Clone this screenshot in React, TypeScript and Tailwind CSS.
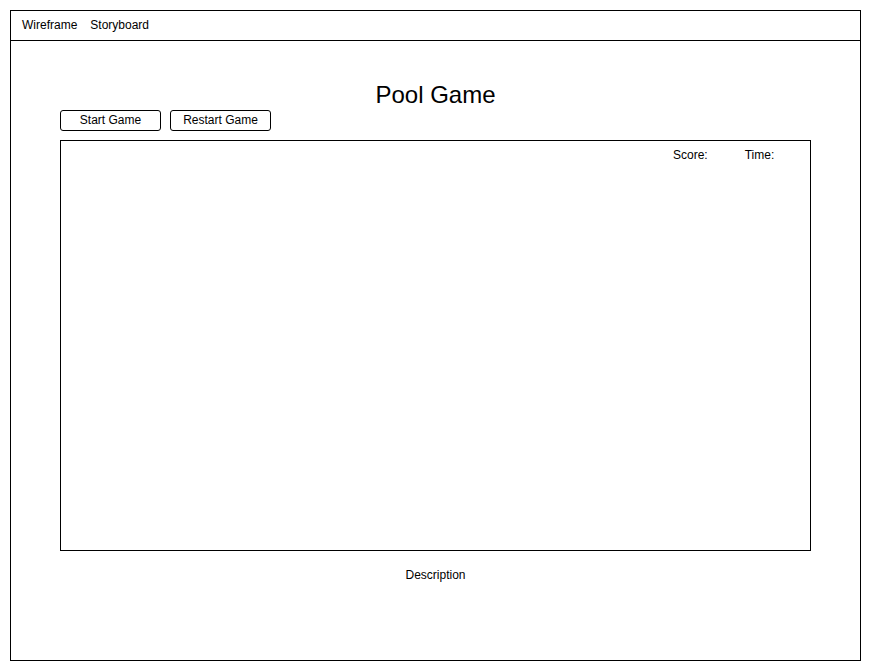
export default function App() {
  return (
    <div className="w-[871px] h-[671px] bg-white p-[10px] font-['Liberation_Sans',Arial,sans-serif] text-black">
      <div className="w-[851px] h-[651px] border border-black flex flex-col">
        <header className="h-[30px] border-b border-black flex items-center gap-[13px] pl-[11px] pb-[2px] text-[12px] leading-[14px]">
          <span>Wireframe</span>
          <span>Storyboard</span>
        </header>
        <main className="flex flex-col pt-[40px]">
          <h1 className="text-center text-[24px] leading-[28px]">Pool Game</h1>
          <div className="flex gap-[9px] pl-[49px] mt-[1px]">
            <button className="w-[101px] h-[21px] border border-black rounded-[3px] pb-[2px] text-[12px] leading-[14px]">
              Start Game
            </button>
            <button className="w-[101px] h-[21px] border border-black rounded-[3px] pb-[2px] text-[12px] leading-[14px]">
              Restart Game
            </button>
          </div>
          <section className="ml-[49px] mt-[9px] w-[751px] h-[411px] border border-black">
            <div className="flex pt-[7px] pl-[612px] gap-[37px] text-[12px] leading-[14px]">
              <span>Score:</span>
              <span>Time:</span>
            </div>
          </section>
          <p className="mt-[17px] text-center text-[12px] leading-[14px]">Description</p>
        </main>
      </div>
    </div>
  );
}
